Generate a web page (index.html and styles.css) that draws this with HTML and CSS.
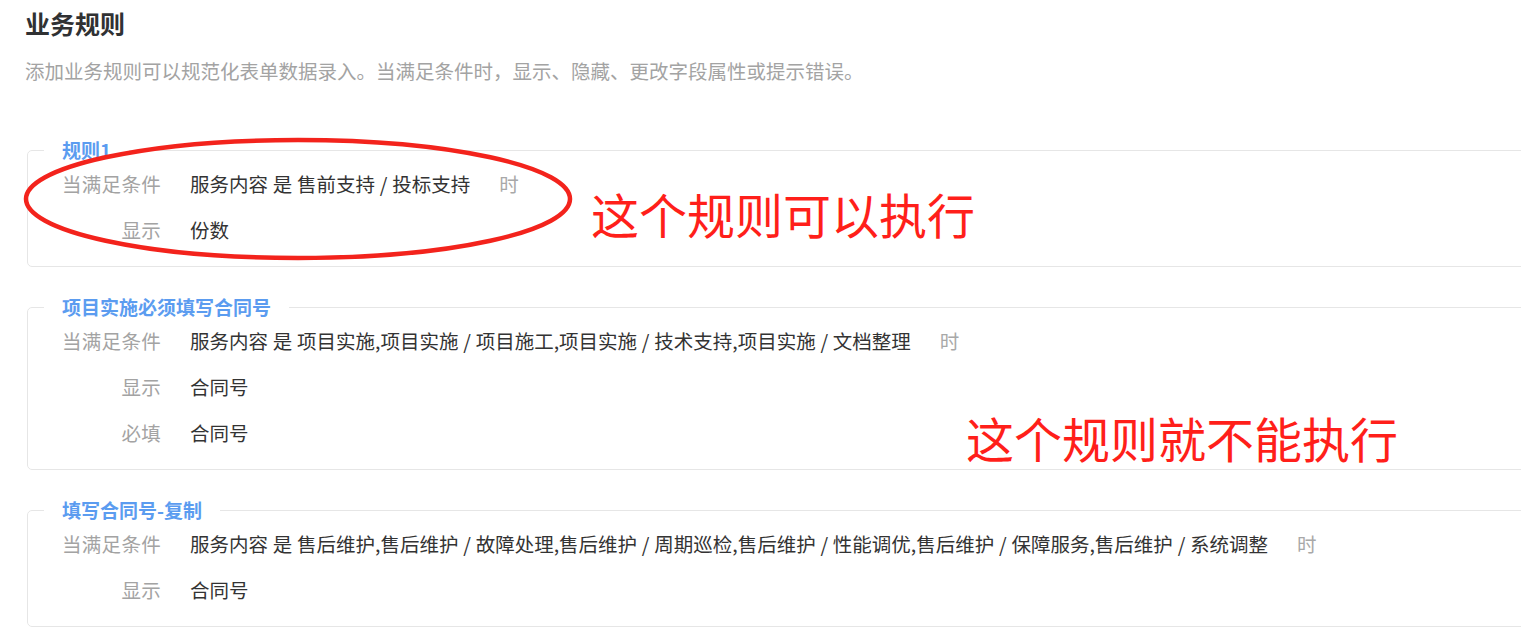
FILE: index.html
```html
<!DOCTYPE html>
<html lang="zh-CN">

<head>
    <meta charset="UTF-8">
    <meta name="viewport" content="width=device-width, initial-scale=1.0">
    <title>业务规则</title>
    <link rel="stylesheet" href="styles.css">
</head>

<body>
    <div class="page">
        <h1 class="title">业务规则</h1>
        <p class="desc">添加业务规则可以规范化表单数据录入。当满足条件时，显示、隐藏、更改字段属性或提示错误。</p>

        <div class="rule-list">
            <fieldset class="rule">
                <legend>规则1</legend>
                <div class="row">
                    <span class="label">当满足条件</span>
                    <span class="value">服务内容 是 售前支持 / 投标支持</span>
                    <span class="suffix">时</span>
                </div>
                <div class="row">
                    <span class="label">显示</span>
                    <span class="value">份数</span>
                </div>
            </fieldset>

            <fieldset class="rule">
                <legend>项目实施必须填写合同号</legend>
                <div class="row">
                    <span class="label">当满足条件</span>
                    <span class="value">服务内容 是 项目实施,项目实施 / 项目施工,项目实施 / 技术支持,项目实施 / 文档整理</span>
                    <span class="suffix">时</span>
                </div>
                <div class="row">
                    <span class="label">显示</span>
                    <span class="value">合同号</span>
                </div>
                <div class="row">
                    <span class="label">必填</span>
                    <span class="value">合同号</span>
                </div>
            </fieldset>

            <fieldset class="rule">
                <legend>填写合同号-复制</legend>
                <div class="row">
                    <span class="label">当满足条件</span>
                    <span class="value">服务内容 是 售后维护,售后维护 / 故障处理,售后维护 / 周期巡检,售后维护 / 性能调优,售后维护 / 保障服务,售后维护 / 系统调整</span>
                    <span class="suffix">时</span>
                </div>
                <div class="row">
                    <span class="label">显示</span>
                    <span class="value">合同号</span>
                </div>
            </fieldset>
        </div>
    </div>

    <!-- 标注 -->
    <svg class="mark-circle" width="556" height="128" viewBox="0 0 556 128">
        <ellipse cx="276" cy="63" rx="272" ry="59" fill="none" stroke="#f3231c" stroke-width="4.5" />
    </svg>
    <div class="note note-ok">这个规则可以执行</div>
    <div class="note note-bad">这个规则就不能执行</div>
</body>

</html>
```

FILE: styles.css
```css
* {
    margin: 0;
    padding: 0;
    box-sizing: border-box;
}

html,
body {
    overflow: hidden;
}

body {
    background: #fff;
    color: #333;
    font-family: "Noto Sans CJK SC", "Noto Sans", sans-serif;
    position: relative;
    min-height: 634px;
}

.page {
    padding: 8px 0 0 25px;
}

.title {
    font-size: 25px;
    line-height: 30px;
    font-weight: bold;
    color: #303133;
}

.desc {
    margin-top: 19px;
    font-size: 19.5px;
    line-height: 28px;
    color: #a3a3a3;
}

.rule-list {
    margin-top: 53px;
    margin-left: 2px;
    width: 1560px;
}

.rule {
    border: 1px solid #e6e6e6;
    border-radius: 5px;
    padding: 0 0 12px;
    margin-bottom: 28px;
}

.rule legend {
    margin-left: 16px;
    padding: 0 18px;
    font-size: 19px;
    line-height: 24px;
    font-weight: bold;
    color: #5b9cf0;
}

.row {
    display: flex;
    align-items: center;
    height: 46px;
    padding-bottom: 4px;
    font-size: 19.5px;
    white-space: nowrap;
}

.row .label {
    width: 133px;
    text-align: right;
    color: #a3a3a3;
    letter-spacing: 0.3px;
}

.row .value {
    margin-left: 29px;
    color: #333;
    word-spacing: 0.4px;
}

.row .suffix {
    margin-left: 29px;
    color: #a8a8a8;
}

.mark-circle {
    position: absolute;
    left: 22px;
    top: 136px;
}

.note {
    position: absolute;
    font-size: 48px;
    line-height: 48px;
    color: #ff1f1a;
    white-space: nowrap;
}

.note-ok {
    left: 591px;
    top: 189px;
}

.note-bad {
    left: 966px;
    top: 413px;
}
```
